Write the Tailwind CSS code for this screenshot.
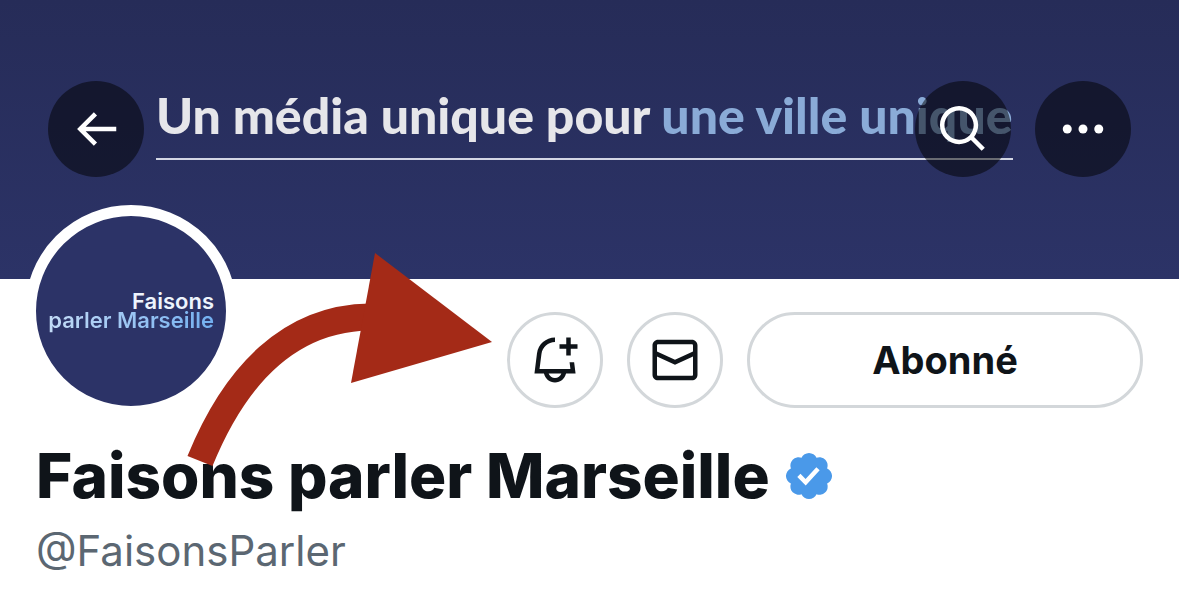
<!DOCTYPE html>
<html lang="fr">
<head>
  <meta charset="UTF-8">
  <meta name="viewport" content="width=device-width, initial-scale=1.0">
  <title>Faisons parler Marseille</title>
  <script src="https://cdn.jsdelivr.net/npm/@tailwindcss/browser@4"></script>
</head>
<body class="bg-white font-['Inter',sans-serif] text-[#0f1419]">
  <div class="relative overflow-hidden">

    <!-- Banner -->
    <header class="grid items-start bg-linear-to-b from-[#262c58] to-[#2c3367] h-[279px]">
      <div class="col-start-1 row-start-1 pt-[82px] pl-[156px]">
        <p class="w-fit whitespace-nowrap border-b-2 border-[#d3d6e4] pb-[10px] font-['Lato',sans-serif] text-[50px] leading-[66px] font-black text-[#e6e6ea]">Un média unique pour <span class="text-[#8aabd7]">une ville unique</span></p>
      </div>
      <nav class="col-start-1 row-start-1 flex gap-6 px-12 pt-[81px]">
        <button aria-label="Retour" class="mr-auto flex size-24 items-center justify-center rounded-full bg-black/50 text-white">
          <svg class="size-[54px]" viewBox="0 0 24 24" fill="currentColor"><path d="M7.414 13l5.043 5.04-1.414 1.42L3.586 12l7.457-7.46 1.414 1.42L7.414 11H21v2H7.414z"/></svg>
        </button>
        <button aria-label="Rechercher" class="flex size-24 items-center justify-center rounded-full bg-black/50 text-white">
          <svg class="size-[54px]" viewBox="0 0 24 24" fill="currentColor"><path d="M10.25 3.75c-3.59 0-6.5 2.91-6.5 6.5s2.91 6.5 6.5 6.5c1.795 0 3.419-.726 4.596-1.904 1.178-1.177 1.904-2.801 1.904-4.596 0-3.59-2.91-6.5-6.5-6.5zm-8.5 6.5c0-4.694 3.806-8.5 8.5-8.5s8.5 3.806 8.5 8.5c0 1.986-.682 3.815-1.824 5.262l4.781 4.781-1.414 1.414-4.781-4.781c-1.447 1.142-3.276 1.824-5.262 1.824-4.694 0-8.5-3.806-8.5-8.5z"/></svg>
        </button>
        <button aria-label="Plus" class="flex size-24 items-center justify-center rounded-full bg-black/50 text-white">
          <svg class="size-[54px]" viewBox="0 0 24 24" fill="currentColor"><circle cx="5" cy="12" r="2"/><circle cx="12" cy="12" r="2"/><circle cx="19" cy="12" r="2"/></svg>
        </button>
      </nav>
    </header>

    <!-- Avatar and actions -->
    <div class="flex items-start pr-9 pl-[25px]">
      <a href="#" class="-mt-[74px] mr-auto flex size-[212px] flex-col items-end justify-center rounded-full border-11 border-white bg-[#2c3367] pt-1 pr-3 text-[22px] leading-[19px] font-semibold whitespace-nowrap">
        <span class="text-[#eef4fd]">Faisons</span>
        <span class="bg-linear-to-r from-[#c3dbf6] to-[#72aff0] bg-clip-text pb-1 text-transparent">parler Marseille</span>
      </a>
      <div class="flex gap-6 pt-[33px]">
        <button aria-label="Activer les notifications" class="flex size-24 items-center justify-center rounded-full border-3 border-[#d3d7da]">
          <svg class="size-[54px]" viewBox="0 0 24 24" fill="currentColor"><path d="M22 5v2h-3v3h-2V7h-3V5h3V2h2v3h3zm-.86 13h-4.241c-.464 2.281-2.482 4-4.899 4s-4.435-1.719-4.899-4H2.87L4 9.05C4.51 5.02 7.93 2 12 2v2C8.94 4 6.36 6.27 5.98 9.3L5.13 16h13.73l-.38-3h2.02l.64 5zM14.83 18H9.17c.41 1.17 1.52 2 2.83 2s2.42-.83 2.83-2z"/></svg>
        </button>
        <button aria-label="Message" class="flex size-24 items-center justify-center rounded-full border-3 border-[#d3d7da]">
          <svg class="size-[54px]" viewBox="0 0 24 24" fill="currentColor"><path d="M1.998 5.5c0-1.381 1.119-2.5 2.5-2.5h15c1.381 0 2.5 1.119 2.5 2.5v13c0 1.381-1.119 2.5-2.5 2.5h-15c-1.381 0-2.5-1.119-2.5-2.5v-13zm2.5-.5c-.276 0-.5.224-.5.5v2.764l8 3.638 8-3.636V5.5c0-.276-.224-.5-.5-.5h-15zm15.5 5.463l-8 3.636-8-3.638V18.5c0 .276.224.5.5.5h15c.276 0 .5-.224.5-.5v-8.037z"/></svg>
        </button>
        <button class="h-24 w-[396px] rounded-full border-3 border-[#d3d7da] text-[38px] font-bold">Abonné</button>
      </div>
    </div>

    <!-- Name -->
    <div class="px-9 pt-5">
      <h1 class="flex items-center gap-3 text-[62px] leading-[78px] font-extrabold whitespace-nowrap">
        Faisons parler Marseille
        <svg class="size-[54px]" viewBox="0 0 22 22" fill="#4a99e9" role="img" aria-label="Compte certifié"><path d="M20.396 11c-.018-.646-.215-1.275-.57-1.816-.354-.54-.852-.972-1.438-1.246.223-.607.27-1.264.14-1.897-.131-.634-.437-1.218-.882-1.687-.47-.445-1.053-.75-1.687-.882-.633-.13-1.29-.083-1.897.14-.273-.587-.704-1.086-1.245-1.44S11.647 1.62 11 1.604c-.646.017-1.273.213-1.813.568s-.969.854-1.24 1.44c-.608-.223-1.267-.272-1.902-.14-.635.13-1.22.436-1.69.882-.445.47-.749 1.055-.878 1.688-.13.633-.08 1.29.144 1.896-.587.274-1.087.705-1.443 1.245-.356.54-.555 1.17-.574 1.817.02.647.218 1.276.574 1.817.356.54.856.972 1.443 1.245-.224.606-.274 1.263-.144 1.896.13.634.433 1.218.877 1.688.47.443 1.054.747 1.687.878.633.132 1.29.084 1.897-.136.274.586.705 1.084 1.246 1.439.54.354 1.17.551 1.816.569.647-.016 1.276-.213 1.817-.567s.972-.854 1.245-1.44c.604.239 1.266.296 1.903.164.636-.132 1.22-.447 1.68-.907.46-.46.776-1.044.908-1.681s.075-1.299-.165-1.903c.586-.274 1.084-.705 1.439-1.246.354-.54.551-1.17.569-1.816zM9.662 14.85l-3.429-3.428 1.293-1.302 2.072 2.072 4.4-4.794 1.347 1.246z"/></svg>
      </h1>
      <p class="text-[42px] leading-[72px] text-[#5b6772]">@FaisonsParler</p>
    </div>

    <!-- Arrow pointing at the bell -->
    <svg class="pointer-events-none absolute top-[253px] left-[187px] h-[214px] w-[306px]" viewBox="187 253 306 214" aria-hidden="true">
      <path d="M200 461C235 375 290 318 370 317" fill="none" stroke="#a42a17" stroke-width="27"/>
      <path d="M375 253L492 342L351 383Z" fill="#a42a17"/>
    </svg>
  </div>
</body>
</html>
